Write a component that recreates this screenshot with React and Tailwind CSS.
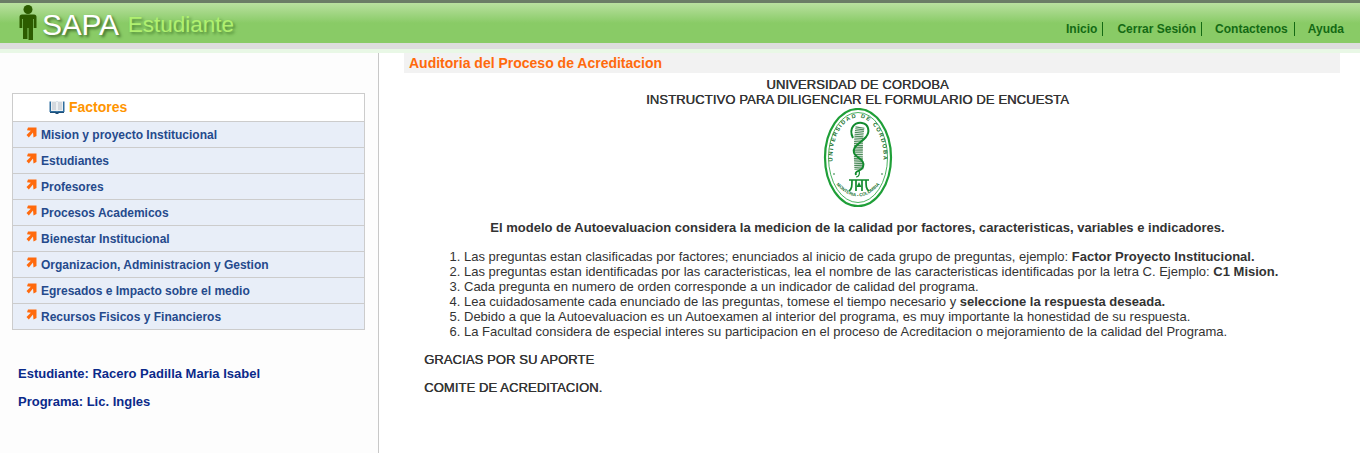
import React from 'react';

const factores = [
    'Mision y proyecto Institucional',
    'Estudiantes',
    'Profesores',
    'Procesos Academicos',
    'Bienestar Institucional',
    'Organizacion, Administracion y Gestion',
    'Egresados e Impacto sobre el medio',
    'Recursos Fisicos y Financieros',
];

const PersonIcon = () => (
    <svg width="18" height="35" viewBox="0 0 18 35" className="shrink-0">
        <circle cx="9" cy="4.5" r="4.500" fill="#2c5c00" />
        <path d="M3 9.500h12a2.500 2.500 0 0 1 2.500 2.500v11h-2.800v-9h-0.700v21H9.500V23h-1v11H4V14h-0.700v9H0.500V12A2.500 2.500 0 0 1 3 9.500z" fill="#2c5c00" />
    </svg>
);

const BookIcon = () => (
    <svg width="16" height="15" viewBox="0 0 16 15" className="shrink-0">
        <path d="M0.500 1.500h15v10.500h-15z" fill="#2e6d9e" />
        <path d="M2 1h5.500l0.500 1 0.500-1H14v10H8.500L8 11.500 7.500 11H2z" fill="#eef1f3" />
        <path d="M3 3h4M3 5h4M3 7h4M3 9h4M9 3h4M9 5h4M9 7h4M9 9h4" stroke="#a9b4bd" strokeWidth="0.800" />
        <path d="M1 12h14v1H9.500v1h-3v-1H1z" fill="#1d4f7a" />
    </svg>
);

const ArrowIcon = () => (
    <svg width="11" height="11" viewBox="0 0 11 11" className="shrink-0">
        <path d="M2 0.500h8.500V9L7.500 10.500 7 5.500 2.800 10.500 0.500 8 4.800 3.800 1 3.200z" fill="#ff6a0d" />
    </svg>
);

const Seal = () => (
    <svg width="70" height="100" viewBox="0 0 70 100" className="block">
        <defs>
            <path id="sealTop" d="M13.100 70A25.500 40 0 1 1 56.900 70" />
            <path id="sealBottom" d="M13 76Q35 101 57 76" />
        </defs>
        <ellipse cx="35" cy="49.500" rx="33" ry="48.500" fill="#fff" stroke="#1f9f38" strokeWidth="2.200" />
        <ellipse cx="35" cy="49.500" rx="29.500" ry="45" fill="none" stroke="#1f9f38" strokeWidth="0.800" />
        <text fontFamily="'Liberation Sans', sans-serif" fontSize="5.600" fontWeight="700" fill="#14702e" letterSpacing="1.500">
            <textPath href="#sealTop" startOffset="50%" textAnchor="middle">UNIVERSIDAD DE CORDOBA</textPath>
        </text>
        <text fontFamily="'Liberation Sans', sans-serif" fontSize="4.400" fontWeight="700" fill="#14702e">
            <textPath href="#sealBottom" startOffset="50%" textAnchor="middle">MONTERIA - COLOMBIA</textPath>
        </text>
        <circle cx="11" cy="66" r="0.800" fill="#14702e" />
        <circle cx="59" cy="66" r="0.800" fill="#14702e" />
        <path d="M37 19C35 32 35 48 36 62" fill="none" stroke="#4d8a5a" strokeWidth="9" strokeDasharray="1.100 0.700" />
        <path d="M30 30C25 20 32 14 39 15 46 16 47 24 43 29 37 36 29 38 31 45 33 50 43 52 40 59 38 64 31 62 33 67" fill="none" stroke="#128a2e" strokeWidth="2" />
        <path d="M36 62C37 66 36 69 33 69" fill="none" stroke="#128a2e" strokeWidth="1.200" />
        <path d="M26 72H46M29 72C29 78 29 81 26 83M33 72V83M39 72V83M43 72C43 78 43 81 46 83" fill="none" stroke="#128a2e" strokeWidth="1.700" />
        <path d="M36 74l2.500 5h-5z" fill="#128a2e" />
    </svg>
);

const instrucciones = [
    <>Las preguntas estan clasificadas por factores; enunciados al inicio de cada grupo de preguntas, ejemplo: <b>Factor Proyecto Institucional.</b></>,
    <>Las preguntas estan identificadas por las caracteristicas, lea el nombre de las caracteristicas identificadas por la letra C. Ejemplo: <b>C1 Mision.</b></>,
    <>Cada pregunta en numero de orden corresponde a un indicador de calidad del programa.</>,
    <>Lea cuidadosamente cada enunciado de las preguntas, tomese el tiempo necesario y <b>seleccione la respuesta deseada.</b></>,
    <>Debido a que la Autoevaluacion es un Autoexamen al interior del programa, es muy importante la honestidad de su respuesta.</>,
    <>La Facultad considera de especial interes su participacion en el proceso de Acreditacion o mejoramiento de la calidad del Programa.</>,
];

const App = () => {
    return (
        <div className="h-[453px] overflow-hidden bg-white font-['Liberation_Sans',Arial,sans-serif] text-[#333]">
            {/* Header */}
            <div className="border-t-[3px] border-[#6b7c66] h-[43px] bg-gradient-to-b from-[#b9e09f] to-[#89cb66] to-50% flex justify-between">
                <div className="flex items-center pl-[19px] pb-[2px]">
                    <PersonIcon />
                    <span className="ml-[5px] mt-[6px] text-[30px] leading-none text-white tracking-[-0.300px] [text-shadow:2px_2px_3px_#3f6b2a]">SAPA</span>
                    <span className="ml-[9px] mt-[6px] text-[22.500px] leading-none text-[#b0f070] [text-shadow:2px_2px_3px_#4f8a35]">Estudiante</span>
                </div>
                <div className="flex items-center pr-[16px] pt-[12px] text-[12px] font-bold text-[#146a14]">
                    <span className="pr-[5px] border-r border-[#146a14] leading-[14px]">Inicio</span>
                    <span className="ml-[14px] pr-[5px] border-r border-[#146a14] leading-[14px]">Cerrar Sesión</span>
                    <span className="ml-[13px] pr-[6px] border-r border-[#146a14] leading-[14px]">Contactenos</span>
                    <span className="ml-[13px] leading-[14px]">Ayuda</span>
                </div>
            </div>
            <div className="h-[6px] bg-[#dddddd]" />
            <div className="h-[4px] bg-[#e9f8e6]" />

            <div className="flex h-[400px]">
                {/* Sidebar */}
                <div className="w-[379px] shrink-0 bg-[#fdfdfd] border-r border-[#c8c8c8] pt-[40px] pl-[12px]">
                    <div className="w-[353px] border border-[#cccccc] bg-[#e8eef8]">
                        <div className="h-[27px] bg-white flex items-center pl-[36px] gap-[4px] text-[14px] font-bold text-[#ff9500]">
                            <BookIcon />
                            <span>Factores</span>
                        </div>
                        {factores.map((factor) => (
                            <div key={factor} className="h-[26px] border-t border-[#cccccc] flex items-center pl-[13px] gap-[4px] text-[12px] font-bold text-[#254a8c]">
                                <span className="mb-[4px]"><ArrowIcon /></span>
                                <span>{factor}</span>
                            </div>
                        ))}
                    </div>
                    <p className="mt-[36px] ml-[6px] text-[13px] leading-[16px] font-bold text-[#0b2a8a]">Estudiante: Racero Padilla Maria Isabel</p>
                    <p className="mt-[12px] ml-[6px] text-[13px] leading-[16px] font-bold text-[#0b2a8a]">Programa: Lic. Ingles</p>
                </div>

                {/* Main */}
                <div className="flex-1 pl-[25px] pr-[20px]">
                    <div className="h-[20px] bg-[#f2f2f2] pl-[5px] text-[14px] leading-[20px] font-bold text-[#ff6a0d]">Auditoria del Proceso de Acreditacion</div>
                    <div className="mr-[29px] flex flex-col items-center text-[13px] pt-[4px] text-[#333]">
                        <div className="text-center leading-[15px] tracking-[0.120px] [text-shadow:0.4px_0_0_#333]">
                            <div>UNIVERSIDAD DE CORDOBA</div>
                            <div>INSTRUCTIVO PARA DILIGENCIAR EL FORMULARIO DE ENCUESTA</div>
                        </div>
                        <div className="mt-[1px]"><Seal /></div>
                        <div className="mt-[13px] leading-[14px] font-bold">El modelo de Autoevaluacion considera la medicion de la calidad por factores, caracteristicas, variables e indicadores.</div>
                    </div>
                    <ol className="mt-[14px] ml-[60px] list-decimal text-[13px] leading-[15px] text-[#333]">
                        {instrucciones.map((item, i) => <li key={i}>{item}</li>)}
                    </ol>
                    <p className="mt-[14px] ml-[20px] text-[13px] leading-[14px] tracking-[0.100px] [text-shadow:0.4px_0_0_#333]">GRACIAS POR SU APORTE</p>
                    <p className="mt-[14px] ml-[20px] text-[13px] leading-[14px] tracking-[0.100px] [text-shadow:0.4px_0_0_#333]">COMITE DE ACREDITACION.</p>
                </div>
            </div>
        </div>
    );
};

export default App;
